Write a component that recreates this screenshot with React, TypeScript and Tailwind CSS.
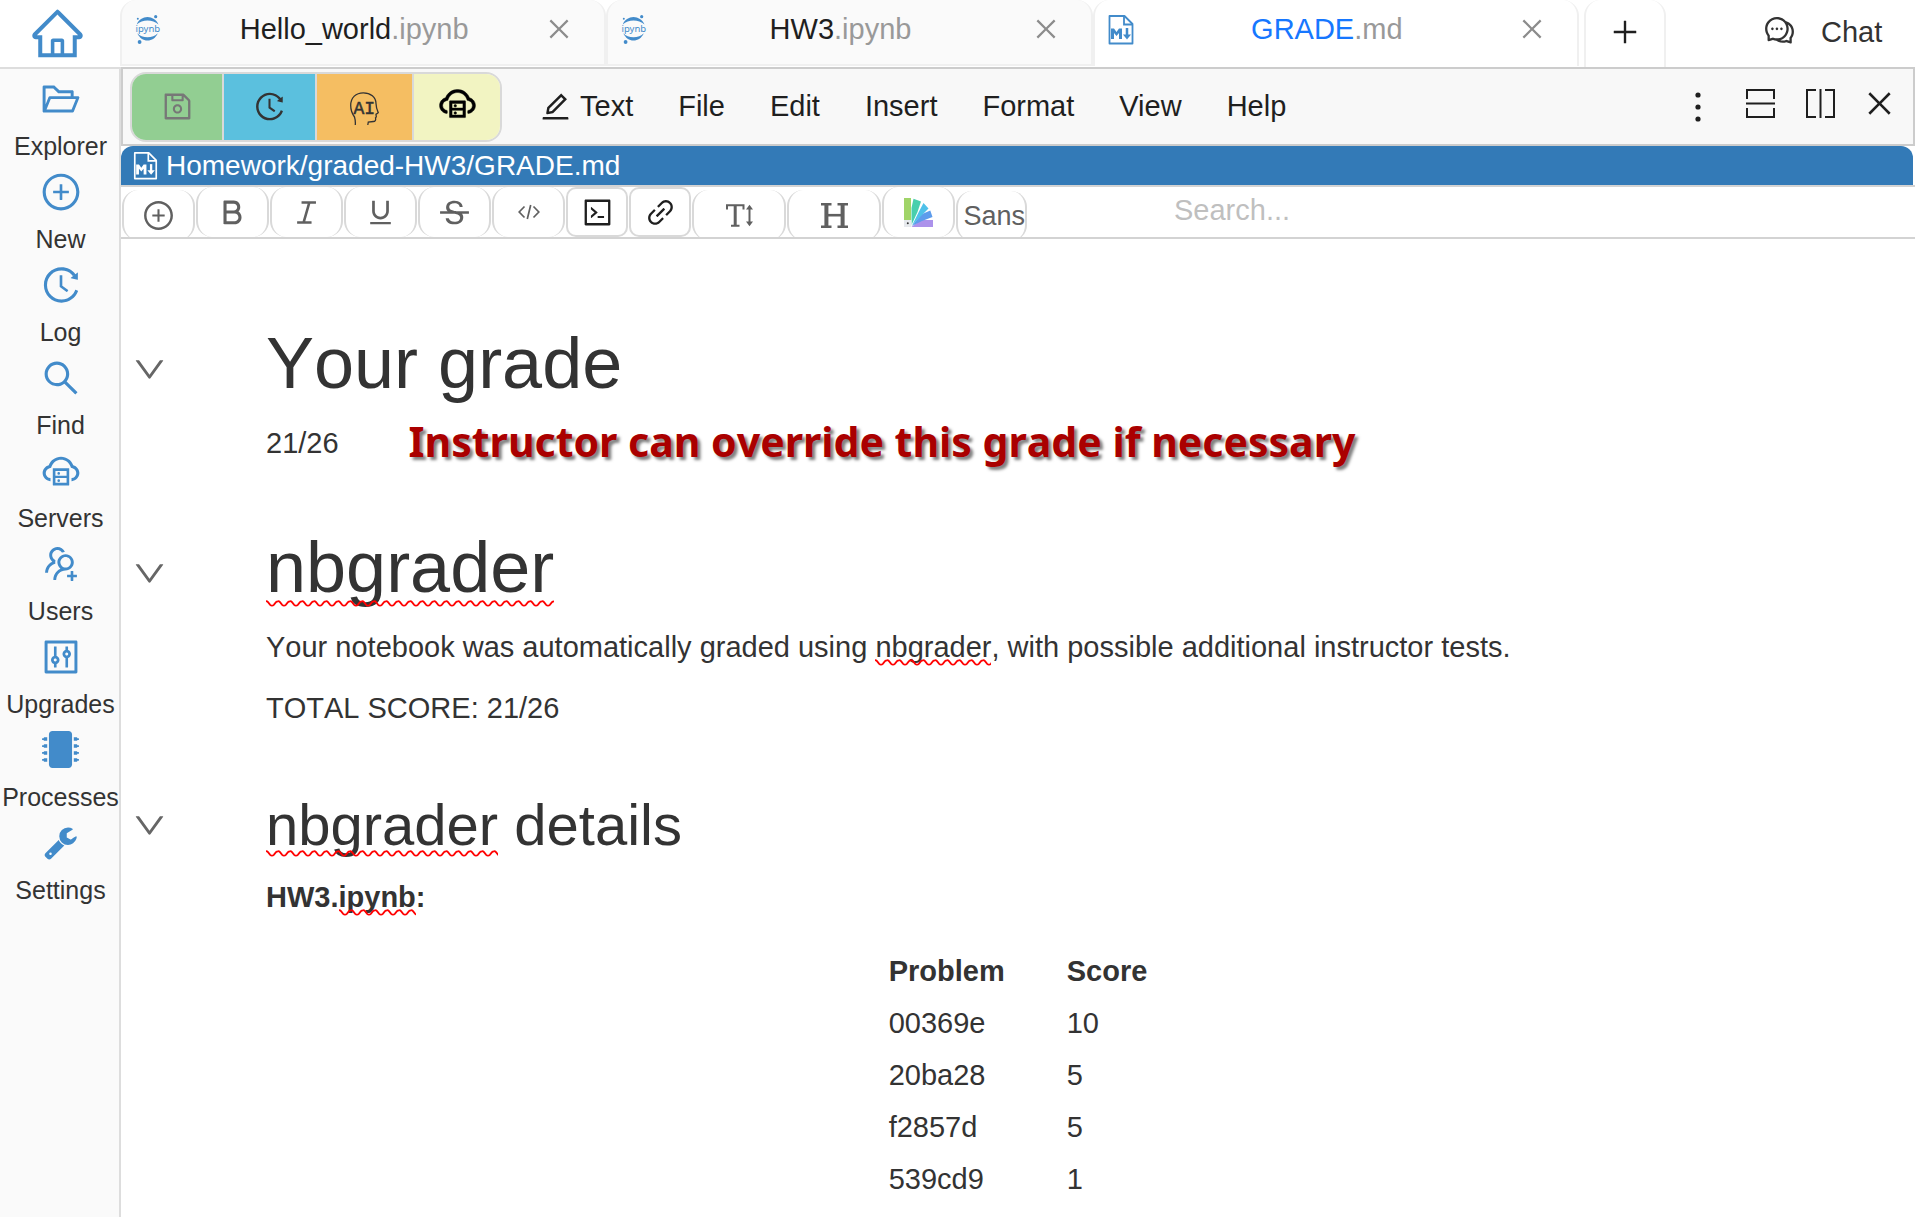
import { useId } from 'react';
import type { ReactNode } from 'react';
import {
  AiOutlineBold,
  AiOutlineClose,
  AiOutlineCloudServer,
  AiOutlineCode,
  AiOutlineComment,
  AiOutlineControl,
  AiOutlineDown,
  AiOutlineEdit,
  AiOutlineFolderOpen,
  AiOutlineHistory,
  AiOutlineHome,
  AiOutlineItalic,
  AiOutlineLink,
  AiOutlinePlus,
  AiOutlinePlusCircle,
  AiOutlineSave,
  AiOutlineSearch,
  AiOutlineStrikethrough,
  AiOutlineUnderline,
  AiOutlineUsergroupAdd,
} from 'react-icons/ai';
import { FaMicrochip } from 'react-icons/fa';

/* ---------- drawings ---------- */

function JupyterIcon() {
  return (
    <svg width="26" height="30" viewBox="0 0 26 30" className="shrink-0" fill="#428bca" aria-hidden="true">
      <circle cx="20.700" cy="1.700" r="1.600" />
      <circle cx="2.800" cy="3.700" r="1" />
      <circle cx="4.600" cy="27" r="1.900" />
      <path d="M1.800 9.500C3.500 4.800 8 2 12.500 2s9 2.800 11 7.500C20.500 6.700 16.500 5.500 12.500 5.500S4.500 6.700 1.800 9.500z" />
      <path d="M2.300 18.300C4.500 23 8.300 25.600 12.500 25.600s8.300-2.600 10.300-7.300C20.500 21 16.500 22.200 12.500 22.200S4.500 21 2.300 18.300z" />
      <text x="12.800" y="17" textAnchor="middle" fontSize="9.500" fontFamily="Noto Sans, sans-serif">
        ipynb
      </text>
    </svg>
  );
}

function MarkdownIcon({ className }: { className?: string }) {
  return (
    <svg viewBox="0 0 26 30" className={className} fill="none" stroke="currentColor" strokeWidth="1.800" aria-hidden="true">
      <path d="M1.500 1h15l8 8v19.500h-23z" strokeLinejoin="round" />
      <path d="M16 1v8.500h8.500" />
      <path d="M3 24V13.500h3l2.500 3.500 2.500-3.500h3V24h-3v-6L8.500 21 6 18v6z" fill="currentColor" stroke="none" />
      <path d="M19 13v8" strokeWidth="2.500" />
      <path d="M15 19.500h8L19 24.500z" fill="currentColor" stroke="none" />
    </svg>
  );
}

function AiHeadIcon() {
  return (
    <svg width="29" height="34" viewBox="0 0 29 34" fill="none" stroke="#333" strokeWidth="1.300" aria-hidden="true">
      <path d="M5.300 33C5.500 30 5.300 27.500 4.500 25 2 21.500.7 18 .7 13.500.7 5.500 6 .8 13.300.8 20.500.8 26 5 26 11.500c0 3.500.3 4.500 2.300 9.200-.6.900-2 .8-2.300 1.600l.3 2.500-.8 1c.6 2.500-.5 3.700-2.200 3.700L18.300 30l-.5 3" />
      <text x="14.300" y="21.500" textAnchor="middle" fontSize="18" fill="#333" stroke="#333" strokeWidth="0.500" fontFamily="Liberation Mono, monospace">
        AI
      </text>
    </svg>
  );
}

function WrenchIcon() {
  return (
    <svg width="35" height="35" viewBox="0 0 1792 1792" fill="currentColor" aria-hidden="true">
      <path d="M448 1472q0-26-19-45t-45-19-45 19-19 45 19 45 45 19 45-19 19-45zm644-420l-682 682q-37 37-90 37-52 0-91-37l-106-108q-38-36-38-90 0-53 38-91l681-681q39 98 114.500 173.500t173.500 114.500zm634-435q0 39-23 106-47 134-164.500 217.500t-258.500 83.500q-185 0-316.500-131.500t-131.500-316.500 131.500-316.500 316.500-131.500q58 0 121.500 16.500t107.500 46.500q16 11 16 28t-16 28l-293 169v224l193 107q5-3 79-48.500t135.500-81 70.500-35.500q15 0 23.500 10t8.500 25z" />
    </svg>
  );
}

function CodeIcon() {
  return (
    <svg width="22" height="16" viewBox="0 0 22 16" fill="none" stroke="currentColor" strokeWidth="1.700" aria-hidden="true">
      <path d="M6.500 2.500L1.200 8l5.300 5.500M15.500 2.500L20.800 8l-5.300 5.500M12.700 1L9.300 15" />
    </svg>
  );
}

function TextHeightIcon() {
  return (
    <svg width="27" height="23" viewBox="0 0 27 23" fill="none" stroke="currentColor" aria-hidden="true">
      <path d="M1 5.500V1.200h16.500v4.300M5 21.700h8.500" strokeWidth="2" />
      <path d="M9.200 1v20" strokeWidth="3" />
      <path d="M23.500 4v15" strokeWidth="2" />
      <path d="M20 5.500L23.500.8 27 5.500zM20 17.500l3.500 4.700 3.500-4.700z" fill="currentColor" stroke="none" />
    </svg>
  );
}

function HeadingIcon() {
  return (
    <svg width="27" height="25" viewBox="0 0 27 25" fill="none" stroke="currentColor" aria-hidden="true">
      <path d="M0 1.200h10.500M16.500 1.200H27M0 23.800h10.500M16.500 23.800H27" strokeWidth="2.400" />
      <path d="M5.400 1v23M21.600 1v23" strokeWidth="4" />
      <path d="M6 12.200h15" strokeWidth="2.600" />
    </svg>
  );
}

function SwatchIcon() {
  return (
    <svg width="29" height="29" viewBox="0 0 29 29" aria-hidden="true">
      <path d="M8 28.500L17 22h12v7H8z" fill="#ac92eb" />
      <path d="M8 28l9-11.500 9.300-4L28.500 19 18 23z" fill="#5d9cec" />
      <path d="M8 27.500l7-14L19.500 5l5 5.500L17 18z" fill="#4fc1e9" />
      <path d="M7.500 27V10L9.500.8 17 3.500 13.500 14z" fill="#48cfad" />
      <path d="M0 0h7v22H0z" fill="#a0d468" />
      <path d="M0 22h7.500v7H0z" fill="#e6e9ed" />
      <circle cx="3.800" cy="25.300" r="1" fill="#333" />
    </svg>
  );
}

function SplitRowsIcon({ className }: { className?: string }) {
  return (
    <svg width="29" height="29" viewBox="0 0 29 29" fill="none" stroke="currentColor" strokeWidth="2" className={className} aria-hidden="true">
      <path d="M1 10V1h27v9M1 19v9h27v-9M0 14.500h29" />
    </svg>
  );
}

function DotsIcon() {
  return (
    <svg width="6" height="30" viewBox="0 0 6 30" fill="currentColor" aria-hidden="true">
      <circle cx="3" cy="3" r="2.600" />
      <circle cx="3" cy="15" r="2.600" />
      <circle cx="3" cy="27" r="2.600" />
    </svg>
  );
}

/* ---------- top bar ---------- */

type TabData = { name: string; ext: string; active?: boolean };

const tabs: TabData[] = [
  { name: 'Hello_world', ext: '.ipynb' },
  { name: 'HW3', ext: '.ipynb' },
  { name: 'GRADE', ext: '.md', active: true },
];

function FileTab({ name, ext, active }: TabData) {
  return (
    <div
      className={
        active
          ? 'flex h-[66px] flex-1 items-start rounded-t-2xl border-x-2 border-[#f0f0f0] bg-white px-[13px]'
          : 'flex h-[66px] flex-1 items-start rounded-t-2xl border-x-2 border-b-2 border-[#f0f0f0] bg-[#fafafa] px-[13px]'
      }
    >
      <button type="button" className="flex flex-1 items-start">
        <span className="pt-[15px]">
          {active ? <MarkdownIcon className="h-[30px] w-[26px] text-[#428bca]" /> : <JupyterIcon />}
        </span>
        <span className={active ? 'flex-1 pt-[9px] pl-0.5 leading-[41px] text-[#1677ff]' : 'flex-1 pt-[9px] pl-0.5 leading-[41px] text-[#1f1f1f]'}>
          {name}
          <span className="text-[#999]">{ext}</span>
        </span>
      </button>
      <button type="button" aria-label={`Close ${name}${ext}`} className="mr-[18px] pt-[15px] text-[28px] text-[#8c8c8c]">
        <AiOutlineClose />
      </button>
    </div>
  );
}

function TopBar() {
  return (
    <header className="flex h-[67px]">
      <a href="#home" aria-label="Home" className="flex w-[120px] shrink-0 justify-center pt-[5px] pr-1.5 text-[57px] text-[#428bca]">
        <AiOutlineHome />
      </a>
      <div className="flex flex-1">
        {tabs.map((t) => (
          <FileTab key={t.name} {...t} />
        ))}
      </div>
      <button
        type="button"
        aria-label="Open new tab"
        className="ml-[5px] flex w-[82px] justify-center rounded-t-2xl border-x-2 border-[#f0f0f0] pt-4 text-[32px] text-[#1f1f1f]"
      >
        <AiOutlinePlus />
      </button>
      <button type="button" className="flex w-[249px] items-start gap-[25px] pt-3 pl-[97px] leading-[41px] text-[#333]">
        <AiOutlineComment className="my-0.5 size-[33px]" />
        Chat
      </button>
    </header>
  );
}

/* ---------- sidebar ---------- */

const sideItems: { label: string; icon: ReactNode }[] = [
  { label: 'Explorer', icon: <AiOutlineFolderOpen /> },
  { label: 'New', icon: <AiOutlinePlusCircle /> },
  { label: 'Log', icon: <AiOutlineHistory /> },
  { label: 'Find', icon: <AiOutlineSearch /> },
  { label: 'Servers', icon: <AiOutlineCloudServer /> },
  { label: 'Users', icon: <AiOutlineUsergroupAdd /> },
  { label: 'Upgrades', icon: <AiOutlineControl /> },
  { label: 'Processes', icon: <FaMicrochip size={37} /> },
  { label: 'Settings', icon: <WrenchIcon /> },
];

function Sidebar() {
  return (
    <nav className="flex w-[121px] shrink-0 flex-col border-t-2 border-r-2 border-[#ddd] bg-[#fafafa] pt-2 pl-0.5 text-[25px] leading-[36px] text-[#333]">
      {sideItems.map((s) => (
        <button key={s.label} type="button" className="flex h-[93px] flex-col items-center">
          <span className="flex h-[43px] items-center text-[42px] text-[#428bca]">{s.icon}</span>
          <span className="mt-2">{s.label}</span>
        </button>
      ))}
    </nav>
  );
}

/* ---------- frame title bar ---------- */

const menus = ['File', 'Edit', 'Insert', 'Format', 'View', 'Help'];

function TitleBar() {
  return (
    <div className="flex h-[79px] items-center border-2 border-[#ccc] bg-[#f8f8f8] pr-[5px] pl-[7px] text-[#1f1f1f]">
      <div className="flex h-[70px] divide-x-2 divide-[#d9d9d9] overflow-hidden rounded-2xl border-2 border-[#d9d9d9] text-[33px] text-[#333]">
        <button type="button" aria-label="Save" className="flex w-[92px] items-center justify-center bg-[#92ce92] text-[#777]">
          <AiOutlineSave />
        </button>
        <button type="button" aria-label="TimeTravel" className="flex w-[93px] items-center justify-center bg-[#5bc0de]">
          <AiOutlineHistory />
        </button>
        <button type="button" aria-label="AI assistant" className="flex w-[97px] items-center justify-center bg-[#f5be62] pt-1">
          <AiHeadIcon />
        </button>
        <button type="button" aria-label="Compute server" className="flex w-[86px] items-center justify-center bg-[#f2f4c2] pb-1.5 text-[41px] text-black">
          <AiOutlineCloudServer stroke="currentColor" strokeWidth="12" />
        </button>
      </div>
      <div className="ml-[15px] flex gap-px">
        <button type="button" className="flex items-center gap-2 pr-[22px] pl-[22px] leading-[41px]">
          <AiOutlineEdit className="size-[33px]" />
          Text
        </button>
        {menus.map((m) => (
          <button key={m} type="button" className="px-[22px] leading-[41px]">
            {m}
          </button>
        ))}
      </div>
      <div className="ml-auto flex items-center text-[33px]">
        <button type="button" aria-label="More" className="flex w-16 justify-center">
          <DotsIcon />
        </button>
        <button type="button" aria-label="Split into rows" className="flex w-[60px] justify-center pb-1.5">
          <SplitRowsIcon />
        </button>
        <button type="button" aria-label="Split into columns" className="flex w-[60px] justify-center pb-1.5">
          <SplitRowsIcon className="rotate-90" />
        </button>
        <button type="button" aria-label="Close" className="flex w-[58px] justify-center pb-1.5">
          <AiOutlineClose />
        </button>
      </div>
    </div>
  );
}

function PathBar() {
  return (
    <div className="mr-0.5 flex h-[39px] items-center gap-2 rounded-t-xl bg-[#337ab7] pl-3 text-[28px] text-white">
      <MarkdownIcon className="h-[28px] w-[25px]" />
      Homework/graded-HW3/GRADE.md
    </div>
  );
}

/* ---------- formatting bar ---------- */

const formats: { label: string; icon: ReactNode }[] = [
  { label: 'Bold', icon: <AiOutlineBold /> },
  { label: 'Italic', icon: <AiOutlineItalic /> },
  { label: 'Underline', icon: <AiOutlineUnderline /> },
  { label: 'Strikethrough', icon: <AiOutlineStrikethrough /> },
  { label: 'Inline code', icon: <CodeIcon /> },
];

function FormatBar() {
  return (
    <div className="flex h-[54px] items-start gap-px overflow-hidden border-y-2 border-[#d3d3d3] pl-px text-[33px] text-[#606060]">
      <button type="button" aria-label="Insert" className="mt-[3px] flex h-[50px] w-[73px] items-center justify-center rounded-2xl border-x-2 border-[#d9d9d9]">
        <AiOutlinePlusCircle />
      </button>
      {formats.map((f) => (
        <button key={f.label} type="button" aria-label={f.label} className="flex h-[50px] w-[73px] items-center justify-center rounded-2xl border-x-2 border-[#d9d9d9]">
          {f.icon}
        </button>
      ))}
      <button type="button" aria-label="Code block" className="flex h-[50px] w-[62px] items-center justify-center rounded-[10px] border-2 border-[#d9d9d9] text-[#1f1f1f]">
        <AiOutlineCode />
      </button>
      <button type="button" aria-label="Link" className="flex h-[50px] w-[62px] items-center justify-center rounded-[10px] border-2 border-[#d9d9d9] text-[#1f1f1f]">
        <AiOutlineLink />
      </button>
      <button type="button" aria-label="Font size" className="mt-[3px] flex h-[50px] w-[94px] items-center justify-center rounded-2xl border-x-2 border-[#d9d9d9]">
        <TextHeightIcon />
      </button>
      <button type="button" aria-label="Heading" className="mt-[3px] flex h-[50px] w-[94px] items-center justify-center rounded-2xl border-x-2 border-[#d9d9d9]">
        <HeadingIcon />
      </button>
      <button type="button" aria-label="Color" className="flex h-[50px] w-[73px] items-center justify-center rounded-2xl border-x-2 border-[#d9d9d9]">
        <SwatchIcon />
      </button>
      <button type="button" aria-label="Font family" className="mt-1 flex h-[50px] w-[71px] items-center justify-end rounded-2xl border-x-2 border-[#d9d9d9] text-[27px]">
        Sans
      </button>
      <input
        type="search"
        aria-label="Search"
        placeholder="Search..."
        className="ml-[146px] h-[46px] min-w-0 flex-1 bg-transparent text-[29px] text-[#333] outline-none placeholder:text-[#bfbfbf]"
      />
    </div>
  );
}

/* ---------- document ---------- */

function Misspelled({ children, body }: { children: ReactNode; body?: boolean }) {
  const id = useId();
  return (
    <span className="relative">
      {children}
      <svg className={body ? 'absolute -bottom-[3px] left-0 h-[7px] w-full' : 'absolute bottom-0 left-0 h-[7px] w-full'} aria-hidden="true">
        <defs>
          <pattern id={id} width="12" height="7" patternUnits="userSpaceOnUse">
            <path d="M-2 1.800C-1 1 1 1 2 2.200L4.200 4.800C5.200 5.900 6.800 5.900 7.800 4.800L10 2.200C11 1 13 1 14 2.200" fill="none" stroke="#f00" strokeWidth="1.800" />
          </pattern>
        </defs>
        <rect width="100%" height="7" fill={`url(#${id})`} />
      </svg>
    </span>
  );
}

function Fold({ level }: { level: 1 | 2 }) {
  return (
    <button
      type="button"
      aria-label="Collapse section"
      className={
        level === 1
          ? 'flex w-[145px] shrink-0 items-center pt-3 pl-2.5 text-[37px] text-[#666]'
          : 'flex w-[145px] shrink-0 items-center pl-2.5 text-[37px] text-[#666]'
      }
    >
      <AiOutlineDown />
    </button>
  );
}

const scores: [string, string][] = [
  ['00369e', '10'],
  ['20ba28', '5'],
  ['f2857d', '5'],
  ['539cd9', '1'],
];

function Document() {
  return (
    <main className="flex flex-col pt-[85px] leading-[41px] text-[#333] [font-kerning:none]">
      <div className="flex">
        <Fold level={1} />
        <h1 className="text-[72px] leading-[79px]">Your grade</h1>
      </div>
      <p className="mt-5 flex items-start gap-[70px] px-[145px]">
        21/26
        <strong className="font-['Noto_Sans',sans-serif] text-[41px] leading-9 font-bold whitespace-nowrap text-[#a00] [text-shadow:3px_3px_3px_rgba(0,0,0,0.5)]">
          Instructor can override this grade if necessary
        </strong>
      </p>
      <div className="mt-16 flex">
        <Fold level={1} />
        <h1 className="text-[72px] leading-[79px]">
          <Misspelled>nbgrader</Misspelled>
        </h1>
      </div>
      <p className="mt-5 px-[145px]">
        Your notebook was automatically graded using <Misspelled body>nbgrader</Misspelled>, with possible additional instructor tests.
      </p>
      <p className="mt-5 px-[145px]">TOTAL SCORE: 21/26</p>
      <div className="mt-16 flex">
        <Fold level={2} />
        <h2 className="text-[58px] leading-[64px]">
          <Misspelled>nbgrader</Misspelled> details
        </h2>
      </div>
      <p className="mt-5 px-[145px] font-bold">
        HW3.<Misspelled body>ipynb</Misspelled>:
      </p>
      <table className="mx-auto mt-[27px] text-left leading-[52px]">
        <thead>
          <tr>
            <th className="px-[31px] font-bold">Problem</th>
            <th className="px-[31px] font-bold">Score</th>
          </tr>
        </thead>
        <tbody>
          {scores.map(([id, score]) => (
            <tr key={id}>
              <td className="px-[31px]">{id}</td>
              <td className="px-[31px]">{score}</td>
            </tr>
          ))}
        </tbody>
      </table>
    </main>
  );
}

export default function App() {
  return (
    <div className="flex min-h-screen flex-col bg-white font-['Liberation_Sans',Arial,sans-serif] text-[29px]">
      <TopBar />
      <div className="flex flex-1">
        <Sidebar />
        <div className="flex min-w-0 flex-1 flex-col">
          <TitleBar />
          <PathBar />
          <FormatBar />
          <Document />
        </div>
      </div>
    </div>
  );
}
